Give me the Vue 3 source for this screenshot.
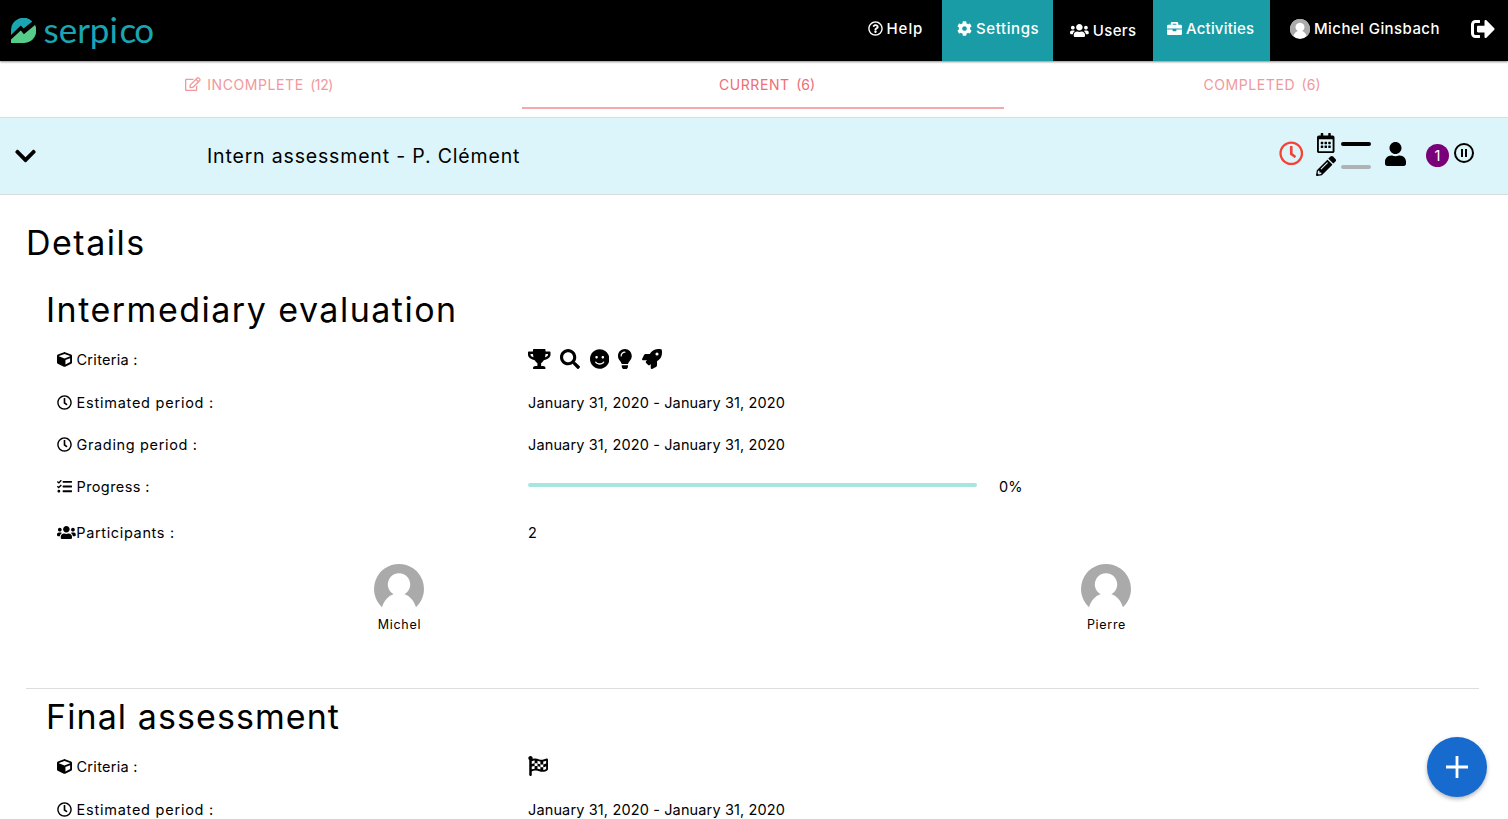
<script setup>
import { h } from 'vue'

// name: [viewBox width, path]
const icons = {
  help: [512, 'M256 8C119.043 8 8 119.083 8 256c0 136.997 111.043 248 248 248s248-111.003 248-248C504 119.083 392.957 8 256 8zm0 448c-110.532 0-200-89.431-200-200 0-110.495 89.472-200 200-200 110.491 0 200 89.471 200 200 0 110.53-89.431 200-200 200zm107.244-255.2c0 67.052-72.421 68.084-72.421 92.863V300c0 6.627-5.373 12-12 12h-45.647c-6.627 0-12-5.373-12-12v-8.659c0-35.745 27.1-50.034 47.579-61.516 17.561-9.845 28.324-16.541 28.324-29.579 0-17.246-21.999-28.693-39.784-28.693-23.189 0-33.894 10.977-48.942 29.969-4.057 5.12-11.46 6.071-16.666 2.124l-27.824-21.098c-5.107-3.872-6.251-11.066-2.644-16.363C184.846 131.491 214.94 112 261.794 112c49.071 0 101.45 38.304 101.45 88.8zM298 368c0 23.159-18.841 42-42 42s-42-18.841-42-42 18.841-42 42-42 42 18.841 42 42z'],
  cog: [512, 'M487.4 315.7l-42.6-24.6c4.3-23.2 4.3-47 0-70.2l42.6-24.6c4.9-2.8 7.1-8.6 5.5-14-11.1-35.6-30-67.8-54.7-94.6-3.8-4.1-10-5.1-14.8-2.3L380.8 110c-17.9-15.4-38.5-27.3-60.8-35.1V25.8c0-5.6-3.9-10.5-9.4-11.7-36.7-8.2-74.3-7.8-109.2 0-5.5 1.2-9.4 6.1-9.4 11.7V75c-22.2 7.9-42.8 19.8-60.8 35.1L88.7 85.5c-4.9-2.8-11-1.9-14.8 2.3-24.7 26.7-43.6 58.9-54.7 94.6-1.7 5.4.6 11.2 5.5 14L67.3 221c-4.3 23.2-4.3 47 0 70.2l-42.6 24.6c-4.9 2.8-7.1 8.6-5.5 14 11.1 35.6 30 67.8 54.7 94.6 3.8 4.1 10 5.1 14.8 2.3l42.6-24.6c17.9 15.4 38.5 27.3 60.8 35.1v49.2c0 5.6 3.9 10.5 9.4 11.7 36.7 8.2 74.3 7.8 109.2 0 5.5-1.2 9.4-6.1 9.4-11.7v-49.2c22.2-7.9 42.8-19.8 60.8-35.1l42.6 24.6c4.9 2.8 11 1.9 14.8-2.3 24.7-26.7 43.6-58.9 54.7-94.6 1.5-5.5-.7-11.3-5.6-14.1zM256 336c-44.1 0-80-35.9-80-80s35.9-80 80-80 80 35.9 80 80-35.9 80-80 80z'],
  users: [640, 'M96 224c35.3 0 64-28.7 64-64s-28.7-64-64-64-64 28.7-64 64 28.7 64 64 64zm448 0c35.3 0 64-28.7 64-64s-28.7-64-64-64-64 28.7-64 64 28.7 64 64 64zm32 32h-64c-17.6 0-33.5 7.1-45.1 18.6 40.3 22.1 68.9 62 75.1 109.4h66c17.7 0 32-14.3 32-32v-32c0-35.3-28.7-64-64-64zm-256 0c61.9 0 112-50.1 112-112S381.9 32 320 32 208 82.1 208 144s50.1 112 112 112zm76.8 32h-8.3c-20.8 10-43.9 16-68.5 16s-47.6-6-68.5-16h-8.3C179.6 288 128 339.6 128 403.2V432c0 26.5 21.5 48 48 48h288c26.5 0 48-21.5 48-48v-28.8c0-63.6-51.6-115.2-115.2-115.2zm-223.7-13.4C161.5 263.1 145.6 256 128 256H64c-35.3 0-64 28.7-64 64v32c0 17.7 14.3 32 32 32h65.9c6.3-47.4 34.9-87.3 75.2-109.4z'],
  briefcase: [512, 'M320 336c0 8.84-7.16 16-16 16h-96c-8.84 0-16-7.16-16-16v-48H0v144c0 25.6 22.4 48 48 48h416c25.6 0 48-22.4 48-48V288H320v48zm144-208h-80V80c0-25.6-22.4-48-48-48H176c-25.6 0-48 22.4-48 48v48H48c-25.6 0-48 22.4-48 48v80h512v-80c0-25.6-22.4-48-48-48zm-144 0H192V96h128v32z'],
  signout: [512, 'M497 273L329 441c-15 15-41 4.5-41-17v-96H152c-13.3 0-24-10.7-24-24v-96c0-13.3 10.7-24 24-24h136V88c0-21.4 25.9-32 41-17l168 168c9.3 9.4 9.3 24.6 0 34zM192 436v-40c0-6.6-5.4-12-12-12H96c-17.7 0-32-14.3-32-32V160c0-17.7 14.3-32 32-32h84c6.6 0 12-5.4 12-12V76c0-6.6-5.4-12-12-12H96c-53 0-96 43-96 96v192c0 53 43 96 96 96h84c6.6 0 12-5.4 12-12z'],
  edit: [576, 'M402.3 344.9l32-32c5-5 13.7-1.5 13.7 5.7V464c0 26.5-21.5 48-48 48H48c-26.5 0-48-21.5-48-48V112c0-26.5 21.5-48 48-48h273.5c7.1 0 10.7 8.6 5.7 13.7l-32 32c-1.5 1.5-3.5 2.3-5.7 2.3H48v352h352V350.5c0-2.1.8-4.1 2.3-5.6zm156.6-201.8L296.3 405.7l-90.4 10c-26.2 2.9-48.5-19.2-45.6-45.6l10-90.4L432.9 17.1c22.9-22.9 59.9-22.9 82.7 0l43.2 43.2c22.9 22.9 22.9 60 .1 82.8zM460.1 174L402 115.9 216.2 301.8l-7.3 65.3 65.3-7.3L460.1 174zm64.8-79.7l-43.2-43.2c-4.1-4.1-10.8-4.1-14.8 0L436 82l58.1 58.1 30.9-30.9c4-4.2 4-10.8-.1-14.9z'],
  clock: [512, 'M256 8C119 8 8 119 8 256s111 248 248 248 248-111 248-248S393 8 256 8zm0 448c-110.5 0-200-89.5-200-200S145.5 56 256 56s200 89.5 200 200-89.5 200-200 200zm61.8-104.4l-84.9-61.7c-3.1-2.3-4.9-5.9-4.9-9.7V116c0-6.6 5.4-12 12-12h32c6.6 0 12 5.4 12 12v141.7l66.8 48.6c5.4 3.9 6.5 11.4 2.6 16.8L334.6 349c-3.9 5.3-11.4 6.5-16.8 2.6z'],
  calendar: [448, 'M148 288h-40c-6.6 0-12-5.4-12-12v-40c0-6.6 5.4-12 12-12h40c6.6 0 12 5.4 12 12v40c0 6.6-5.4 12-12 12zm108-12v-40c0-6.6-5.4-12-12-12h-40c-6.6 0-12 5.4-12 12v40c0 6.6 5.4 12 12 12h40c6.6 0 12-5.4 12-12zm96 0v-40c0-6.6-5.4-12-12-12h-40c-6.6 0-12 5.4-12 12v40c0 6.6 5.4 12 12 12h40c6.6 0 12-5.4 12-12zm-96 96v-40c0-6.6-5.4-12-12-12h-40c-6.6 0-12 5.4-12 12v40c0 6.6 5.4 12 12 12h40c6.6 0 12-5.4 12-12zm-96 0v-40c0-6.6-5.4-12-12-12h-40c-6.6 0-12 5.4-12 12v40c0 6.6 5.4 12 12 12h40c6.6 0 12-5.4 12-12zm192 0v-40c0-6.6-5.4-12-12-12h-40c-6.6 0-12 5.4-12 12v40c0 6.6 5.4 12 12 12h40c6.6 0 12-5.4 12-12zm96-260v352c0 26.5-21.5 48-48 48H48c-26.5 0-48-21.5-48-48V112c0-26.5 21.5-48 48-48h48V12c0-6.6 5.4-12 12-12h40c6.6 0 12 5.4 12 12v52h128V12c0-6.6 5.4-12 12-12h40c6.6 0 12 5.4 12 12v52h48c26.5 0 48 21.5 48 48zm-48 346V160H48v298c0 3.3 2.7 6 6 6h340c3.3 0 6-2.7 6-6z'],
  pencil: [512, 'M497.9 142.1l-46.1 46.1c-4.7 4.7-12.3 4.7-17 0l-111-111c-4.7-4.7-4.7-12.3 0-17l46.1-46.1c18.7-18.7 49.1-18.7 67.9 0l60.1 60.1c18.8 18.7 18.8 49.1 0 67.9zM284.2 99.8L21.6 362.4.4 483.9c-2.9 16.4 11.4 30.6 27.8 27.8l121.5-21.3 262.6-262.6c4.7-4.7 4.7-12.3 0-17l-111-111c-4.8-4.7-12.4-4.7-17.1 0zM124.1 339.9c-5.5-5.5-5.5-14.3 0-19.8l154-154c5.5-5.5 14.3-5.5 19.8 0s5.5 14.3 0 19.8l-154 154c-5.5 5.5-14.3 5.5-19.8 0zM88 424h48v36.3l-64.5 11.3-31.1-31.1L51.7 376H88v48z'],
  user: [448, 'M224 256c70.7 0 128-57.3 128-128S294.7 0 224 0 96 57.3 96 128s57.3 128 128 128zm89.6 32h-16.7c-22.2 10.2-46.9 16-72.9 16s-50.6-5.8-72.9-16h-16.7C60.2 288 0 348.2 0 422.4V464c0 26.5 21.5 48 48 48h352c26.5 0 48-21.5 48-48v-41.6c0-74.2-60.2-134.4-134.4-134.4z'],
  cube: [512, 'M239.1 6.3l-208 78c-18.7 7-31.1 25-31.1 45v225.1c0 18.2 10.3 34.8 26.5 42.9l208 104c13.5 6.8 29.4 6.8 42.9 0l208-104c16.3-8.1 26.5-24.8 26.5-42.9V129.3c0-20-12.4-37.9-31.1-44.9l-208-78C262 2.2 250 2.2 239.1 6.3zM256 68.4l192 72v1.1l-192 78-192-78v-1.1l192-72zm32 356V275.5l160-65v133.9l-160 80z'],
  tasks: [512, 'M139.61 35.5a12 12 0 0 0-17 0L58.93 98.81l-22.7-22.12a12 12 0 0 0-17 0L3.53 92.41a12 12 0 0 0 0 17l47.59 47.4a12.78 12.78 0 0 0 17.61 0l15.59-15.62L156.52 69a12.09 12.09 0 0 0 .09-17zm0 159.19a12 12 0 0 0-17 0l-63.68 63.72-22.7-22.1a12 12 0 0 0-17 0L3.53 252a12 12 0 0 0 0 17L51 316.5a12.77 12.77 0 0 0 17.6 0l15.7-15.69 72.2-72.22a12 12 0 0 0 .09-16.9zM64 368c-26.49 0-48.59 21.5-48.59 48S37.53 464 64 464a48 48 0 0 0 0-96zm432 16H208a16 16 0 0 0-16 16v32a16 16 0 0 0 16 16h288a16 16 0 0 0 16-16v-32a16 16 0 0 0-16-16zm0-320H208a16 16 0 0 0-16 16v32a16 16 0 0 0 16 16h288a16 16 0 0 0 16-16V80a16 16 0 0 0-16-16zm0 160H208a16 16 0 0 0-16 16v32a16 16 0 0 0 16 16h288a16 16 0 0 0 16-16v-32a16 16 0 0 0-16-16z'],
  trophy: [576, 'M552 64H448V24c0-13.3-10.7-24-24-24H152c-13.3 0-24 10.7-24 24v40H24C10.7 64 0 74.7 0 88v56c0 35.7 22.5 72.4 61.9 100.7 31.5 22.7 69.8 37.1 110 41.7C203.3 338.5 240 360 240 360v72h-48c-35.3 0-64 20.7-64 56v12c0 6.6 5.4 12 12 12h296c6.6 0 12-5.4 12-12v-12c0-35.3-28.7-56-64-56h-48v-72s36.7-21.5 68.1-73.6c40.3-4.6 78.6-19 110-41.7 39.3-28.3 61.9-65 61.9-100.7V88c0-13.3-10.7-24-24-24zM99.3 192.8C74.9 175.2 64 155.6 64 144v-16h64.2c1 32.6 5.8 61.2 12.8 86.2-15.1-5.2-29.2-12.4-41.7-21.4zM512 144c0 16.1-17.7 36.1-35.3 48.8-12.5 9-26.7 16.2-41.8 21.4 7-25 11.8-53.6 12.8-86.2H512v16z'],
  search: [512, 'M505 442.7L405.3 343c-4.5-4.5-10.6-7-17-7H372c27.6-35.3 44-79.7 44-128C416 93.1 322.9 0 208 0S0 93.1 0 208s93.1 208 208 208c48.3 0 92.7-16.4 128-44v16.3c0 6.4 2.5 12.5 7 17l99.7 99.7c9.4 9.4 24.6 9.4 33.9 0l28.3-28.3c9.4-9.4 9.4-24.6.1-34zM208 336c-70.7 0-128-57.2-128-128 0-70.7 57.2-128 128-128 70.7 0 128 57.2 128 128 0 70.7-57.2 128-128 128z'],
  smile: [496, 'M248 8C111 8 0 119 0 256s111 248 248 248 248-111 248-248S385 8 248 8zm80 168c17.7 0 32 14.3 32 32s-14.3 32-32 32-32-14.3-32-32 14.3-32 32-32zm-160 0c17.7 0 32 14.3 32 32s-14.3 32-32 32-32-14.3-32-32 14.3-32 32-32zm194.8 170.2C334.3 380.4 292.5 400 248 400s-86.3-19.6-114.8-53.8c-13.6-16.3 11-36.7 24.6-20.5 22.4 26.9 55.2 42.2 90.2 42.2s67.8-15.4 90.2-42.2c13.4-16.2 38.1 4.2 24.6 20.5z'],
  bulb: [352, 'M96.06 454.35c.01 6.29 1.87 12.45 5.36 17.69l17.09 25.69a31.99 31.99 0 0 0 26.64 14.28h61.71a31.99 31.99 0 0 0 26.64-14.28l17.09-25.69a31.989 31.989 0 0 0 5.36-17.69l.04-38.35H96.01l.05 38.35zM0 176c0 44.37 16.45 84.85 43.56 115.78 16.52 18.85 42.36 58.23 52.21 91.45.04.26.07.52.11.78h160.24c.04-.26.07-.51.11-.78 9.85-33.22 35.69-72.6 52.21-91.45C335.55 260.85 352 220.37 352 176 352 78.61 272.91-.3 175.45 0 73.44.31 0 82.97 0 176zm176-80c-44.11 0-80 35.89-80 80 0 8.84-7.16 16-16 16s-16-7.16-16-16c0-61.76 50.24-112 112-112 8.84 0 16 7.16 16 16s-7.16 16-16 16z'],
  rocket: [512, 'M505.12019,19.09375c-1.18945-5.53125-6.65819-11-12.207-12.1875C460.716,0,435.507,0,410.40747,0,307.17523,0,245.26909,55.20312,199.05238,128H94.83772c-16.34763.01562-35.55658,11.875-42.88664,26.48438L2.51562,253.29688A28.4,28.4,0,0,0,0,264a24.00867,24.00867,0,0,0,24.00582,24H127.81618l-22.47457,22.46875c-11.36521,11.36133-12.99607,32.25781,0,45.25L156.24582,406.625c11.15623,11.1875,32.15619,13.15625,45.27726,0l22.47457-22.46875V488a24.00867,24.00867,0,0,0,24.00581,24,28.55934,28.55934,0,0,0,10.707-2.51562l98.72834-49.39063c14.62888-7.29687,26.50776-26.5,26.50776-42.85937V312.79688c72.59753-46.3125,128.03493-108.40626,128.03493-211.09376C512.07526,76.5,512.07526,51.29688,505.12019,19.09375ZM384.04033,168A40,40,0,1,1,424.05,128,40.02322,40.02322,0,0,1,384.04033,168Z'],
  flag: [512, 'M243.2 189.9V258c26.1 5.9 49.3 15.6 73.6 22.3v-68.2c-26-5.8-49.4-15.5-73.6-22.2zm223.3-123c-34.3 15.9-76.5 31.9-117 31.9C296 98.8 251.7 64 184.3 64c-25 0-47.3 4.4-68 12 2.8-7.3 4.1-15.2 3.6-23.6C118.1 24 94.8 1.2 66.3 0 34.3-1.3 8 24.3 8 56c0 19 9.5 35.8 24 45.9V488c0 13.3 10.7 24 24 24h16c13.3 0 24-10.7 24-24v-94.4c28.3-12.1 63.6-22.1 114.4-22.1 53.6 0 97.8 34.8 165.2 34.8 48.2 0 86.7-16.3 122.5-40.9 8.7-6 13.8-15.8 13.8-26.4V95.9c.1-23.3-24.2-38.8-45.4-29zM169.6 325.5c-25.8 2.7-50 8.2-73.6 16.6v-70.5c26.2-9.3 47.5-15 73.6-17.4v71.3zM464 191c-23.6 9.8-46.3 19.5-73.6 23.9V286c24.8-3.4 51.4-11.8 73.6-26v70.5c-25.1 16.1-48.5 24.7-73.6 27.1V286c-27 3.7-47.9 1.5-73.6-5.6v67.4c-23.9-7.4-47.3-16.7-73.6-21.3V258c-19.7-4.4-40.8-6.8-73.6-3.8v-70c-22.4 3.1-44.6 10.2-73.6 20.9v-70.5c33.2-12.2 50.1-19.8 73.6-22v71.6c27-3.7 48.4-1.3 73.6 5.7v-67.4c23.7 7.4 47.2 16.7 73.6 21.3v68.4c23.7 5.3 47.6 6.9 73.6 2.7V143c27-4.8 52.3-13.6 73.6-22.5z'],
  chevron: [448, 'M207.029 381.476L12.686 187.132c-9.373-9.373-9.373-24.569 0-33.941l22.667-22.667c9.357-9.357 24.522-9.375 33.901-.04L224 284.505l154.745-154.021c9.379-9.335 24.544-9.317 33.901.04l22.667 22.667c9.373 9.373 9.373 24.569 0 33.941L240.971 381.476c-9.373 9.372-24.569 9.372-33.942 0z'],
}

const Icon = (props) => {
  const [w, d] = icons[props.name]
  return h('svg', { viewBox: `0 0 ${w} 512`, width: (props.size * w) / 512, height: props.size, fill: 'currentColor' }, [h('path', { d })])
}
Icon.props = ['name', 'size']

const Avatar = (props) =>
  h('svg', { viewBox: '0 0 50 50', width: props.size, height: props.size }, [
    h('circle', { cx: 25, cy: 25, r: 25, fill: props.back }),
    h('path', { fill: '#aaa', d: 'M25 0A25 25 0 0 0 8 43.3C10 37 14 32 19.6 30.3A11.2 11.2 0 1 1 30.4 30.3C36 32 40 37 42 43.3A25 25 0 0 0 25 0Z' }),
  ])
Avatar.props = ['size', 'back']

const period = 'January 31, 2020 - January 31, 2020'
const stages = [
  {
    title: 'Intermediary evaluation',
    tracking: 'wide',
    criteria: ['trophy', 'search', 'smile', 'bulb', 'rocket'],
    graded: true,
    participants: [
      { name: 'Michel', cls: 'first' },
      { name: 'Pierre', cls: 'second' },
    ],
  },
  { title: 'Final assessment', tracking: 'mid', criteria: ['flag'], graded: false },
]
</script>

<template>
  <div class="page">
    <header class="nav">
      <div class="brand">
        <svg class="leaf" viewBox="0 0 25 25" width="25" height="25">
          <path d="M0 17V12.5A12.5 12.5 0 0 1 21.3 3.5L12.6 10.6L9.8 7.5Z" fill="#1ba5b2" />
          <path d="M0 25V21.6L9.8 12.4L12.9 16.2L24 6.9A12.5 12.5 0 0 1 12.5 25Z" fill="#57cc8a" />
        </svg>
        <div class="wordmark">serpi<span class="c">c</span><span class="o">o</span></div>
      </div>
      <a class="item help"><Icon name="help" :size="15" /><span>Help</span></a>
      <a class="item settings on"><Icon name="cog" :size="15" /><span>Settings</span></a>
      <a class="item people"><Icon name="users" :size="15" /><span>Users</span></a>
      <a class="item activities on"><Icon name="briefcase" :size="15" /><span>Activities</span></a>
      <a class="item me"><Avatar :size="20" back="#fff" /><span>Michel Ginsbach</span></a>
      <a class="item out"><Icon name="signout" :size="24" /></a>
    </header>

    <nav class="tabs">
      <a class="tab"><Icon name="edit" :size="14" /><span class="label lead">INCOMPLETE</span><span class="count tight">(12)</span></a>
      <a class="tab active"><span class="label">CURRENT</span><span class="count">(6)</span></a>
      <a class="tab"><span class="label">COMPLETED</span><span class="count">(6)</span></a>
    </nav>

    <section class="activity">
      <Icon class="toggle" name="chevron" :size="24" />
      <h1>Intern assessment - P. Clément</h1>
      <div class="status">
        <Icon class="late" name="clock" :size="24.5" />
        <div class="phases">
          <Icon name="calendar" :size="20" /><i class="bar"></i>
          <Icon name="pencil" :size="20" /><i class="bar idle"></i>
        </div>
        <Icon class="owner" name="user" :size="24" />
        <span class="badge">1</span>
        <svg class="pause" viewBox="0 0 20 20" width="20" height="20">
          <circle cx="10" cy="10" r="9" fill="none" stroke="#000" stroke-width="2" />
          <path d="M7 6h2v8H7zM11 6h2v8h-2z" />
        </svg>
      </div>
    </section>

    <main>
      <h2>Details</h2>
      <section v-for="s in stages" :key="s.title" class="stage">
        <h3 :class="s.tracking">{{ s.title }}</h3>
        <div class="row criteria">
          <div class="key"><Icon name="cube" :size="15" /><span class="k1">Criteria :</span></div>
          <div class="glyphs"><Icon v-for="c in s.criteria" :key="c" :name="c" :size="20" /></div>
        </div>
        <div class="row">
          <div class="key"><Icon name="clock" :size="15" /><span class="k2">Estimated period :</span></div>
          <div class="date">{{ period }}</div>
        </div>
        <template v-if="s.graded">
          <div class="row">
            <div class="key"><Icon name="clock" :size="15" /><span class="k3">Grading period :</span></div>
            <div class="date">{{ period }}</div>
          </div>
          <div class="row">
            <div class="key"><Icon name="tasks" :size="15" /><span class="k4">Progress :</span></div>
            <div class="progress"><i></i>0%</div>
          </div>
          <div class="row group">
            <div class="key"><Icon name="users" :size="15" /><span class="k3">Participants :</span></div>
            <div>2</div>
          </div>
          <div class="people-list">
            <figure v-for="p in s.participants" :key="p.name" :class="p.cls">
              <Avatar :size="50" back="#fff" />
              <figcaption>{{ p.name }}</figcaption>
            </figure>
          </div>
        </template>
      </section>
    </main>

    <button class="fab">
      <svg viewBox="0 0 22 22" width="22" height="22"><path d="M9.6 0h2.8v9.6H22v2.8h-9.6V22H9.6v-9.6H0V9.6h9.6z" fill="#fff" /></svg>
    </button>
  </div>
</template>

<style>
html, body { overflow: hidden; background: #fff; }
</style>

<style scoped>
.page {
  height: 819px;
  overflow: hidden;
  font-family: Inter, "Noto Sans", sans-serif;
  font-size: 14.5px;
  color: #000;
}
svg { display: block; flex: none; }
h1, h2, h3, figure { margin: 0; font-weight: 400; }

.nav {
  position: relative;
  display: flex;
  height: 61px;
  background: #000;
  color: #fff;
  box-shadow: 0 1px 2px rgba(0, 0, 0, 0.45);
  font-size: 15px;
  font-weight: 450;
}
.brand { display: flex; padding-left: 11px; margin-right: auto; }
.leaf { margin-top: 18px; }
.wordmark {
  margin: 5px 0 0 7.5px;
  font: 400 35px/48px Lato, sans-serif;
  color: #1ba5b2;
  white-space: nowrap;
}
.wordmark .c { margin-left: 1.5px; }
.wordmark .o { margin-left: -2px; }
.item {
  display: flex;
  align-items: center;
  box-sizing: border-box;
  height: 61px;
  padding-bottom: 4px;
  white-space: nowrap;
}
.item span { margin-left: 4px; }
.on { background: #199ca6; }
.help { width: 74.5px; letter-spacing: 0.95px; }
.settings { width: 111px; padding-left: 15px; letter-spacing: 0.6px; }
.people { width: 100px; padding: 0 0 0 17px; letter-spacing: 0.35px; }
.activities { width: 117px; padding-left: 14px; letter-spacing: 0.2px; }
.me { width: 201px; padding-left: 20px; letter-spacing: 0.43px; }
.out { width: 37px; }

.tabs {
  display: flex;
  height: 56px;
  padding-left: 12px;
  gap: 22px;
  border-bottom: 1px solid #ddd;
  font-size: 14px;
  color: #f0999c;
  letter-spacing: 0.58px;
}
.tab {
  display: flex;
  align-items: center;
  justify-content: center;
  box-sizing: border-box;
  flex: none;
  width: 482px;
  height: 48px;
  padding-left: 8px;
  border-bottom: 2px solid transparent;
}
.tab:first-child { width: 488px; padding-left: 6px; }
.tab:last-child { width: 470px; padding-left: 2px; }
.tab.active { color: #ee6e73; border-color: #f6a9ac; }
.lead { margin-left: 6.5px; }
.count { margin-left: 6.5px; letter-spacing: 0; }
.tight { letter-spacing: -0.4px; }

.activity {
  display: flex;
  align-items: center;
  height: 76px;
  background: #dcf5fa;
  border-bottom: 1px solid #d8dcdd;
}
.toggle { margin-left: 15px; }
h1 { margin-left: 171px; font-size: 19.5px; line-height: 28px; letter-spacing: 0.83px; }
.status { display: flex; align-items: center; margin-left: auto; padding: 0 34px 4px 0; }
.late { color: #f44336; margin-top: -1px; }
.phases {
  display: grid;
  grid-template-columns: 20px 30px;
  gap: 3px 5px;
  align-items: center;
  justify-items: center;
  margin: 1px 14px 0 13px;
}
.bar { width: 30px; height: 4px; margin-top: 2px; border-radius: 2px; background: #000; }
.idle { background: #b0b3b5; }
.badge {
  width: 23px;
  height: 23px;
  margin: 3px 5px 0 20px;
  border-radius: 50%;
  background: #7a007a;
  color: #fff;
  font-size: 14.5px;
  line-height: 23px;
  text-align: center;
}
.pause { margin-top: -2px; }

main { padding: 9px 29px 0 26px; }
h2 { font-size: 34px; line-height: 78px; letter-spacing: 1.5px; }
.stage { border-bottom: 1px solid #ddd; }
h3 { padding-left: 20px; font-size: 34px; line-height: 56px; }
.wide { letter-spacing: 1.49px; }
.mid { letter-spacing: 1.08px; }
.row {
  display: grid;
  grid-template-columns: 471px 1fr;
  align-items: center;
  box-sizing: border-box;
  height: 42px;
  padding: 0 0 2px 31px;
}
.criteria { height: 44px; }
.group { height: 50px; }
.key { display: flex; align-items: center; }
.key svg { margin-right: 4.5px; }
.group .key svg { margin-right: 0.5px; }
.k1 { letter-spacing: 0.28px; }
.k2 { letter-spacing: 0.76px; }
.k3 { letter-spacing: 0.65px; }
.k4 { letter-spacing: 0.4px; }
.glyphs { display: flex; gap: 9.5px; }
.date { letter-spacing: 0.14px; }
.progress { display: flex; align-items: center; }
.progress i { width: 449px; height: 4px; margin: -2px 22px 0 0; border-radius: 2px; background: #a7e5e1; }
.people-list { display: flex; height: 130px; padding-top: 6px; box-sizing: border-box; }
figure { display: flex; flex-direction: column; align-items: center; width: 707px; }
.first { margin-left: 19.5px; }
figcaption { margin-top: 1px; padding-left: 1px; font-size: 12.5px; line-height: 19px; letter-spacing: 0.7px; }

.fab {
  position: fixed;
  right: 21px;
  bottom: 22px;
  display: flex;
  align-items: center;
  justify-content: center;
  width: 60px;
  height: 60px;
  padding: 0;
  border: 0;
  border-radius: 50%;
  background: #186bce;
  box-shadow: 0 2px 4px rgba(0, 0, 0, 0.3);
}
</style>
